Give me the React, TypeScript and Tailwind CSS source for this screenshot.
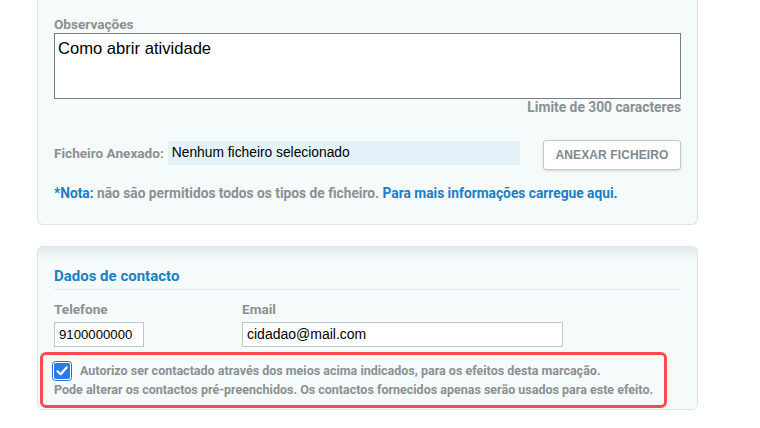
import React from 'react'

const roboto = { fontFamily: 'Roboto, "Liberation Sans", sans-serif' }
const arial = { fontFamily: '"Liberation Sans", Arial, sans-serif' }

function CheckIcon() {
  return (
    <svg width="20" height="20" viewBox="0 0 20 20" className="shrink-0">
      <rect x="0.5" y="0.5" width="19" height="19" rx="3" fill="#ffffff" stroke="#1f6fd6" />
      <rect x="2" y="2" width="16" height="16" rx="2" fill="#2a7be4" />
      <path d="M5.5 10.2 L8.6 13.2 L14.6 6.4" fill="none" stroke="#ffffff" strokeWidth="2.2" strokeLinecap="round" strokeLinejoin="round" />
    </svg>
  )
}

export default function App() {
  return (
    <div className="w-[760px] h-[428px] overflow-hidden bg-white pl-[37px]" style={roboto}>
      <div className="w-[661px]">
        {/* Observações card (top cut off) */}
        <div className="border border-t-0 border-[#dbe5e7] rounded-b-[6px] bg-[#f5fafb] px-[16px] pt-[16px] pb-[23px]">
          <div className="text-[13.6px] leading-[16px] font-bold text-[#8b9092]">Observações</div>
          <div className="mt-[1px] h-[66px] border border-[#7c7c7c] bg-white px-[3px] pt-[3px]">
            <span className="text-[16.6px] leading-[19px] text-black" style={arial}>Como abrir atividade</span>
          </div>
          <div className="h-[17px] text-right text-[13.8px] leading-[17px] font-bold text-[#8b9092]">Limite de 300 caracteres</div>

          <div className="mt-[24px] flex items-start h-[30px]">
            <div className="flex items-center h-[26px]">
              <span className="text-[13.6px] font-bold text-[#8b9092] mr-[4px]">Ficheiro Anexado:</span>
              <div className="w-[352px] h-[24px] bg-[#e3f2f8] flex items-center pl-[4px]">
                <span className="text-[13.8px] text-black" style={arial}>Nenhum ficheiro selecionado</span>
              </div>
            </div>
            <div className="ml-auto w-[138px] h-[30px] bg-white border border-[#c4c8c9] rounded-[3px] shadow-[0_1px_3px_rgba(0,0,0,0.12)] flex items-center justify-center">
              <span className="text-[12px] font-bold text-[#7e8a8c] tracking-[0.1px]" style={arial}>ANEXAR FICHEIRO</span>
            </div>
          </div>

          <div className="mt-[15px] text-[13.75px] leading-[16px] font-bold text-[#8b9092]">
            <span className="text-[#1b7fc5]">*Nota:</span> não são permitidos todos os tipos de ficheiro.{' '}
            <span className="text-[#1b7fc5]">Para mais informações carregue aqui.</span>
          </div>
        </div>

        {/* Dados de contacto card */}
        <div className="mt-[21px] h-[164px] border border-[#dbe5e7] rounded-[6px] bg-[linear-gradient(to_bottom,#e3ebed,#f5fafb_14px)] px-[16px] pt-[20px]">
          <div className="border-b border-[#e4eaeb] pb-[4px]">
            <div className="text-[15px] leading-[18px] font-bold text-[#1b7fc5]">Dados de contacto</div>
          </div>
          <div className="mt-[10px] flex">
            <div className="w-[188px]">
              <div className="text-[13.6px] leading-[18px] font-bold text-[#8b9092]">Telefone</div>
              <div className="mt-[4px] w-[90px] h-[25px] border border-[#c1c6c7] bg-white flex items-center pl-[4px]">
                <span className="text-[13.2px] text-black" style={arial}>9100000000</span>
              </div>
            </div>
            <div>
              <div className="text-[13.6px] leading-[18px] font-bold text-[#8b9092]">Email</div>
              <div className="mt-[4px] w-[321px] h-[25px] border border-[#c1c6c7] bg-white flex items-center pl-[4px]">
                <span className="text-[14px] text-black" style={arial}>cidadao@mail.com</span>
              </div>
            </div>
          </div>

          <div className="mt-[5px] -ml-[14px] w-[627px] h-[56px] border-[3px] border-[#ff4b4f] rounded-[6px] bg-[#f5fafb] pl-[11px] pt-[6px]">
            <div className="flex items-center h-[20px] -ml-[2px]">
              <CheckIcon />
              <span className="ml-[8px] text-[12.5px] font-bold text-[#8b9092]">
                Autorizo ser contactado através dos meios acima indicados, para os efeitos desta marcação.
              </span>
            </div>
            <div className="text-[12.5px] leading-[17px] font-bold text-[#8b9092]">
              Pode alterar os contactos pré-preenchidos. Os contactos fornecidos apenas serão usados para este efeito.
            </div>
          </div>
        </div>
      </div>
    </div>
  )
}
